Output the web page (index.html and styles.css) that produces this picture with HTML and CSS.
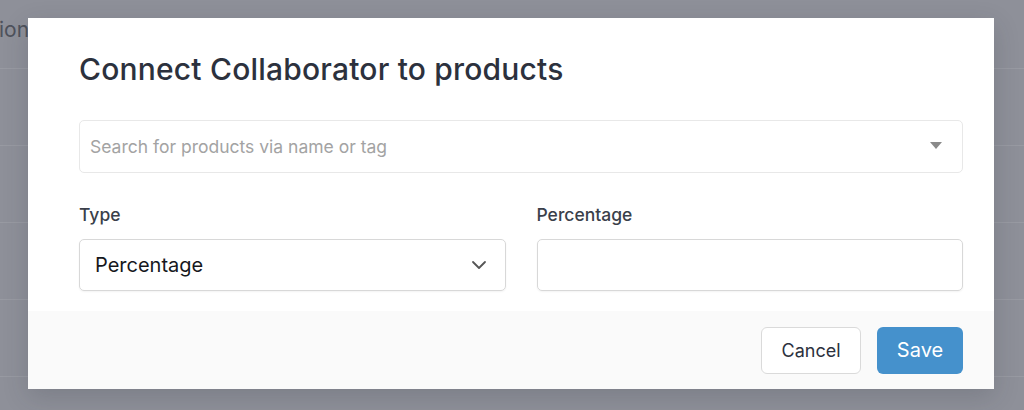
FILE: index.html
```html
<!DOCTYPE html>
<html lang="en">
<head>
  <meta charset="UTF-8" />
  <meta name="viewport" content="width=device-width, initial-scale=1" />
  <title>Connect Collaborator</title>
  <link rel="stylesheet" href="styles.css">
</head>
<body>

<div class="backdrop">
  <div class="bg-row"><span class="bg-cell">ion</span></div>
  <div class="bg-row"></div>
  <div class="bg-row"></div>
  <div class="bg-row"></div>
  <div class="bg-row"></div>
</div>

<div class="modal">
  <div class="modal-body">
    <h2 class="modal-title">Connect Collaborator to products</h2>

    <div class="search">
      <span class="search-placeholder">Search for products via name or tag</span>
      <svg class="caret" width="12" height="7" viewBox="0 0 12 7"><path d="M0 0h12L6 7z" fill="#8a8a8a"/></svg>
    </div>

    <div class="fields">
      <div class="field">
        <label class="field-label">Type</label>
        <div class="select">
          <span>Percentage</span>
          <svg width="16" height="10" viewBox="0 0 16 10"><path d="M2 2l6 6 6-6" fill="none" stroke="#555" stroke-width="1.8" stroke-linecap="round" stroke-linejoin="round"/></svg>
        </div>
      </div>
      <div class="field">
        <label class="field-label">Percentage</label>
        <div class="input"></div>
      </div>
    </div>
  </div>

  <div class="modal-footer">
    <button class="btn btn-cancel">Cancel</button>
    <button class="btn btn-save">Save</button>
  </div>
</div>

</body>
</html>
```

FILE: styles.css
```css
body {
  margin: 0;
  height: 410px;
  overflow: hidden;
  background: #8e9099;
  font-family: 'Inter', 'Liberation Sans', sans-serif;
}
.bg-row {
  height: 76px;
  border-bottom: 1px solid #989aa2;
}
.bg-row:first-child {
  height: 68px;
}
.bg-cell {
  display: block;
  padding-top: 17px;
  margin-left: -1px;
  font-size: 21px;
  color: #4e525c;
}
.modal {
  position: absolute;
  top: 18px;
  left: 28px;
  width: 966px;
  height: 371px;
  background: #fff;
  box-shadow: 0 8px 24px rgba(40, 44, 56, 0.18);
  display: flex;
  flex-direction: column;
}
.modal-body {
  padding: 34px 31px 20px 51px;
  flex: 1;
}
.modal-title {
  margin: 0 0 34px;
  font-size: 30px;
  line-height: 34px;
  font-weight: 500;
  color: #2c313d;
  letter-spacing: 0.2px;
}
.search {
  height: 51px;
  border: 1px solid #e8e8e8;
  border-radius: 5px;
  display: flex;
  align-items: center;
  justify-content: space-between;
  padding: 0 20px 0 10px;
}
.search-placeholder {
  font-size: 17.5px;
  color: #a3a3a3;
}
.caret {
  margin-top: -2px;
}
.fields {
  display: flex;
  gap: 31px;
  margin-top: 31px;
}
.field {
  flex: 1;
}
.field-label {
  display: block;
  font-size: 17.5px;
  font-weight: 500;
  color: #3a3f4a;
  line-height: 22px;
  margin-bottom: 13px;
}
.select,
.input {
  height: 50px;
  border: 1px solid #d8d8d8;
  border-radius: 5px;
  box-shadow: 0 1px 2px rgba(0, 0, 0, 0.05);
}
.select {
  display: flex;
  align-items: center;
  justify-content: space-between;
  padding: 0 18px 0 15px;
  font-size: 20px;
  color: #16181d;
}
.modal-footer {
  height: 78px;
  background: #fafafa;
  display: flex;
  justify-content: flex-end;
  align-items: center;
  gap: 16px;
  padding: 0 31px 0 0;
}
.btn {
  height: 47px;
  border-radius: 6px;
  font-family: inherit;
  font-size: 18px;
  cursor: pointer;
}
.btn-cancel {
  width: 100px;
  background: #fff;
  border: 1px solid #dadada;
  color: #2c313d;
}
.btn-save {
  width: 86px;
  background: #4591cc;
  border: none;
  color: #fff;
  font-size: 20px;
}
```
